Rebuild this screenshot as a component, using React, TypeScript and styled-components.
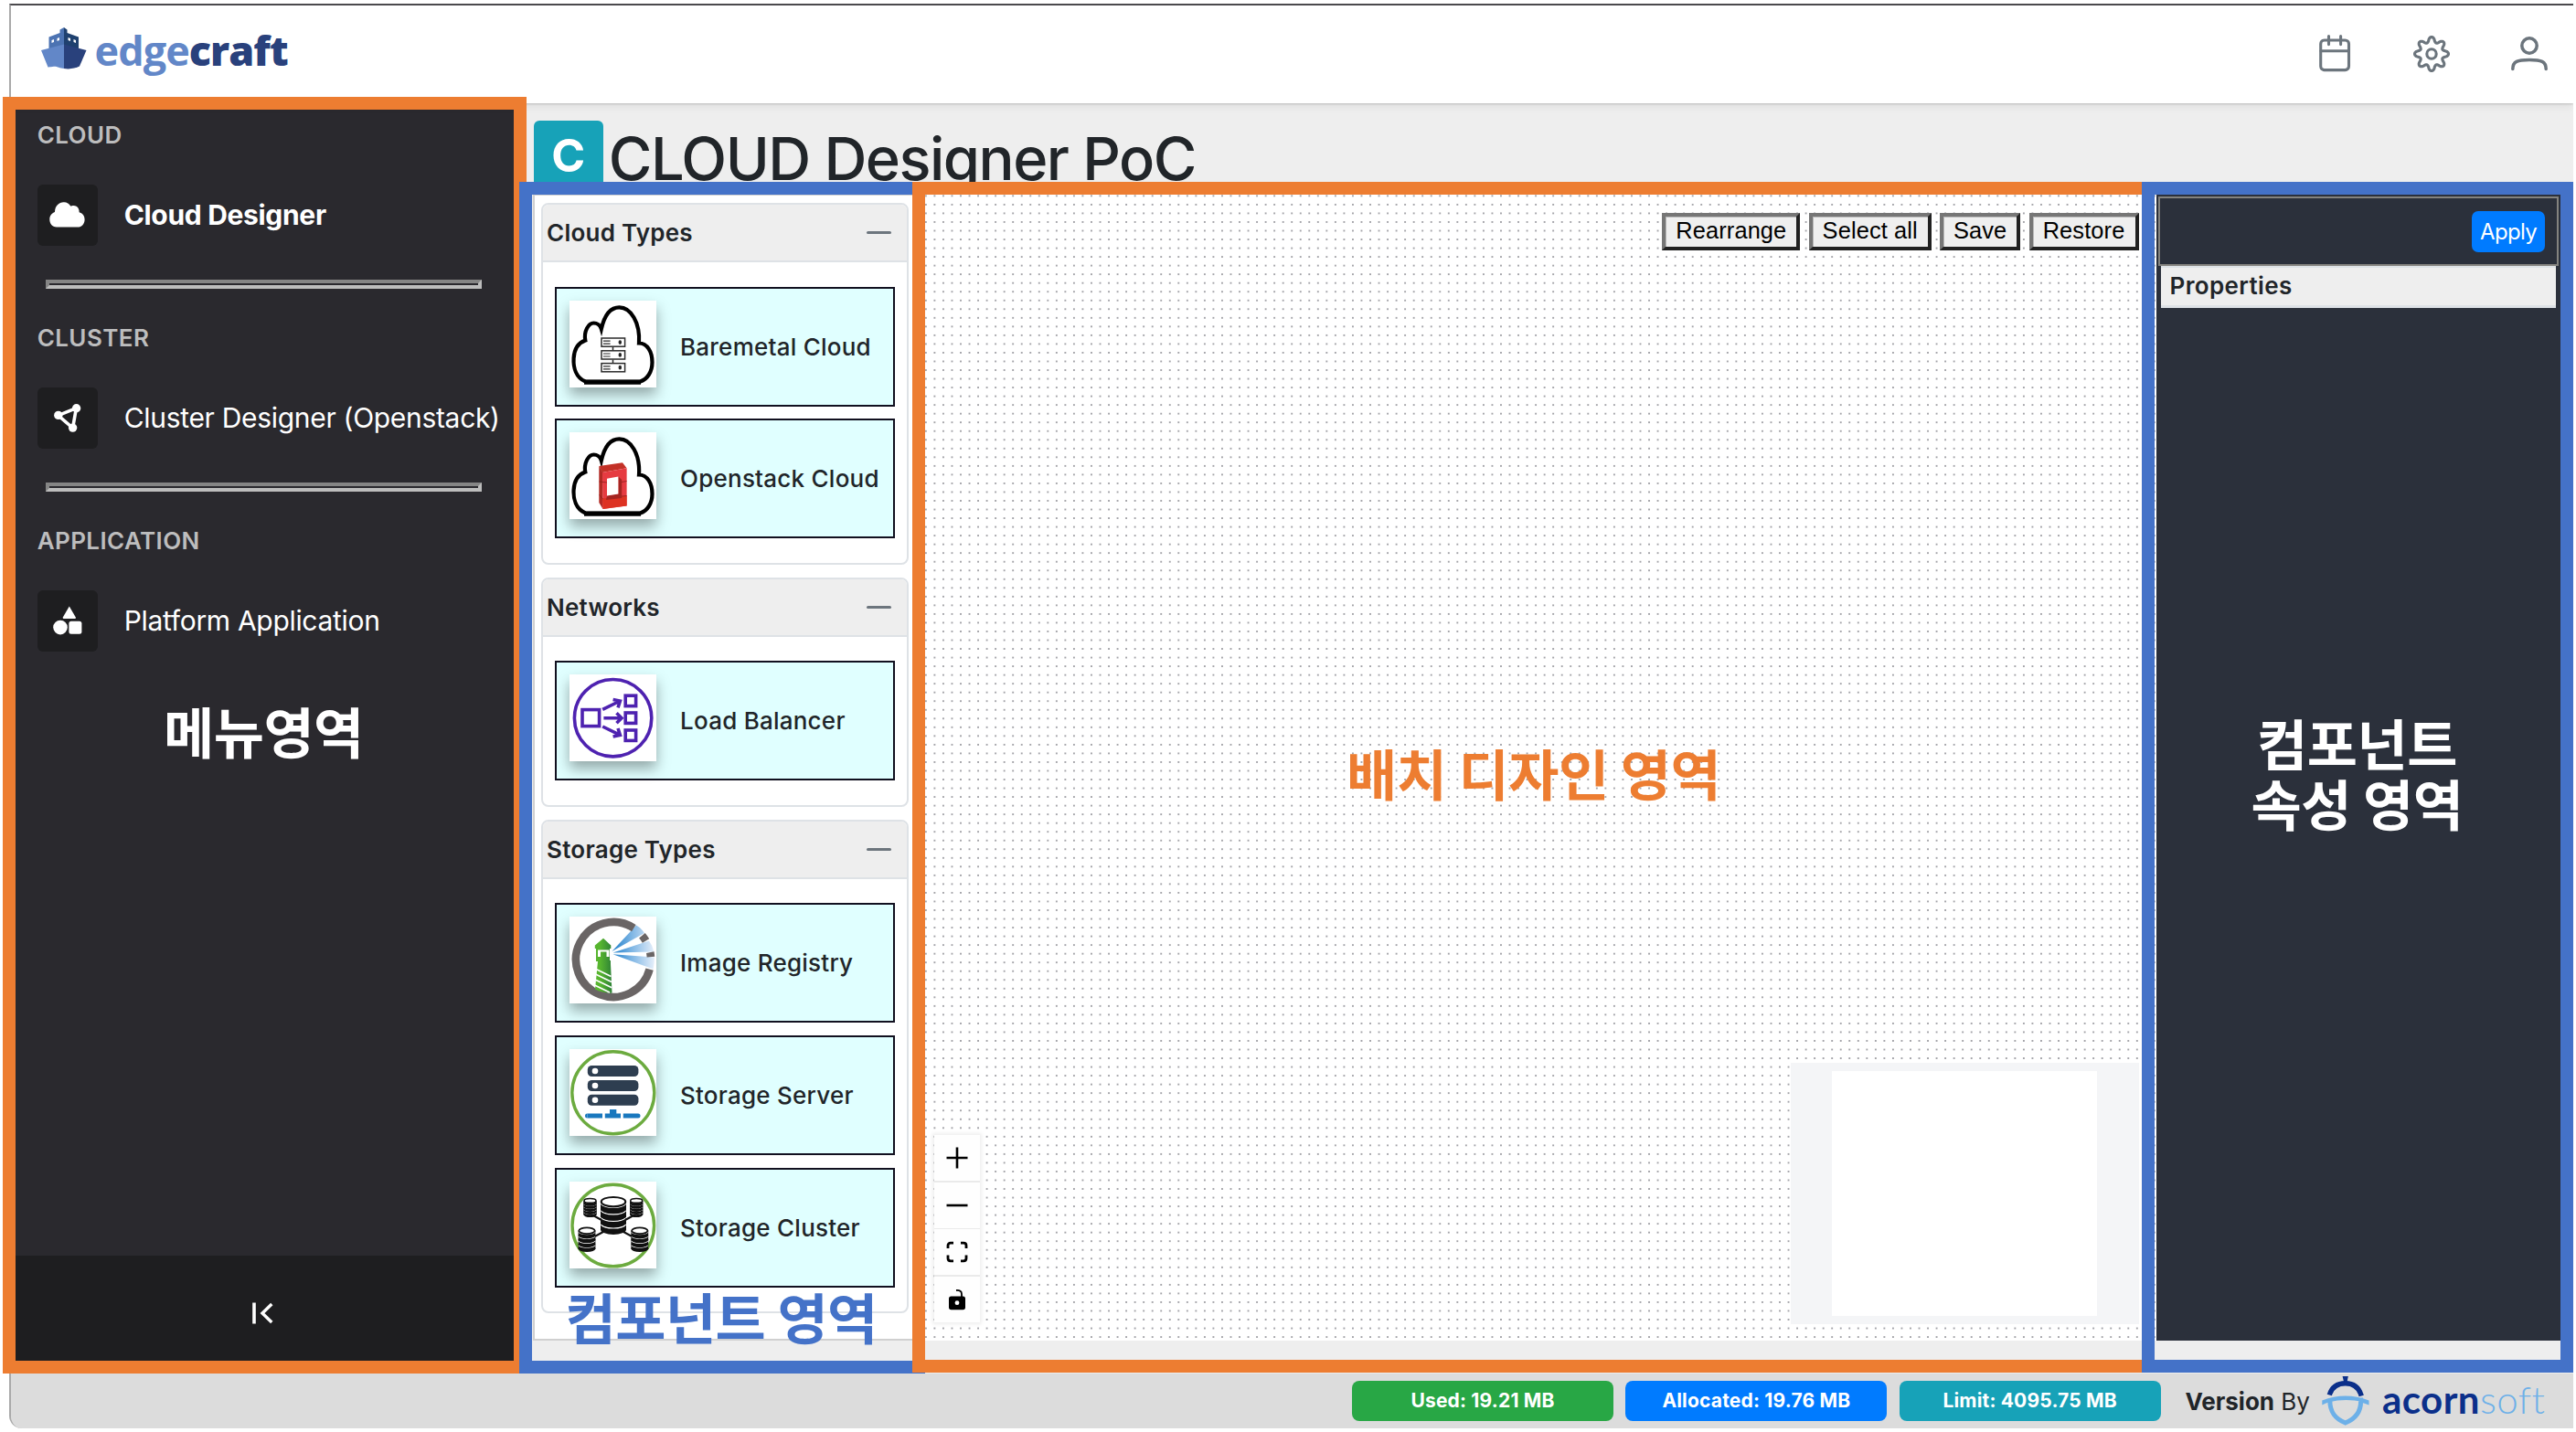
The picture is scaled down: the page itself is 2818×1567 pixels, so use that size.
import React from 'react';
import styled, { createGlobalStyle, css } from 'styled-components';

const ORANGE = '#ed7d31';
const BLUE = '#4472c8';

const GlobalStyle = createGlobalStyle`
  *, *::before, *::after { box-sizing: border-box; }
  body { margin: 0; background: #fff; }
  svg { display: block; flex: none; }
`;

const Page = styled.div`
  position: relative;
  width: 2818px;
  height: 1567px;
  padding: 4px 3px 4px 10px;
  overflow: hidden;
  background: #fff;
  color: #212529;
  font-family: Inter, 'Noto Sans CJK KR', sans-serif;
`;

const Window = styled.div`
  display: flex;
  flex-direction: column;
  height: 1559px;
  border-top: 2px solid #4b494d;
  border-left: 2px solid #a9a9a9;
  border-bottom-left-radius: 14px;
  overflow: hidden;
  background: #dcdcdc;
`;

/* Header */

const Header = styled.header`
  position: relative;
  z-index: 1;
  flex: none;
  display: flex;
  align-items: flex-start;
  justify-content: space-between;
  height: 107px;
  padding: 24px 27px 0 33px;
  background: #fff;
  box-shadow: 0 1px 2px rgba(0, 0, 0, 0.16), 0 3px 10px rgba(0, 0, 0, 0.07);
`;

const Brand = styled.div`
  display: flex;
  gap: 8.5px;
`;

const BrandName = styled.span`
  margin-top: -3px;
  font: 700 45px/56px 'Open Sans', sans-serif;
  letter-spacing: -0.95px;
  color: #6287c8;
`;

const BrandAccent = styled.b`
  color: #29417c;
`;

const HeaderActions = styled.nav`
  display: flex;
  gap: 64.7px;
  padding-top: 8px;
  color: #6c757d;
`;

/* Body and side menu */

const Body = styled.div`
  flex: none;
  display: flex;
  height: 1390px;
`;

const Sidebar = styled.aside`
  flex: none;
  display: flex;
  flex-direction: column;
  justify-content: space-between;
  width: 563px;
  background: #2a292e;
`;

const Menu = styled.div`
  display: flex;
  flex-direction: column;
  gap: 37.5px;
  padding: 18.8px 0 0 28.7px;
`;

const MenuTitle = styled.div`
  font-size: 26px;
  font-weight: 600;
  line-height: 32.5px;
  letter-spacing: 0.4px;
  color: #bdbdbe;
`;

const MenuItem = styled.div<{ $active?: boolean }>`
  display: flex;
  align-items: center;
  gap: 29px;
  height: 67px;
  color: #fff;
  font-size: 30px;
  white-space: nowrap;
  ${(p) =>
    p.$active
      ? css`
          font-weight: 700;
          letter-spacing: -0.32px;
        `
      : css`
          font-weight: 400;
          letter-spacing: -0.31px;
        `}
`;

const MenuIcon = styled.span`
  display: flex;
  align-items: center;
  justify-content: center;
  width: 66px;
  height: 67px;
  border-radius: 6px;
  background: #1e1e20;
`;

const Separator = styled.hr`
  width: 477px;
  height: 10px;
  margin: 0 0 0 9px;
  border: 4px solid;
  border-color: #858585 #bdbdbd #bdbdbd #858585;
  background: #2a292e;
`;

const CollapseBar = styled.div`
  display: flex;
  align-items: center;
  justify-content: center;
  height: 129px;
  padding: 0 11px 4px 0;
  background: #1e1e20;
`;

/* Main area */

const Main = styled.main`
  flex: 1;
  display: flex;
  flex-direction: column;
  padding-left: 8px;
  background: #eee;
`;

const TitleBar = styled.div`
  flex: none;
  display: flex;
  gap: 6px;
  height: 99px;
  padding: 19px 0 0 0.8px;
`;

const TitleBadge = styled.span`
  width: 76px;
  height: 76px;
  border-radius: 6px;
  background: #17a2b8;
  color: #fff;
  font-size: 50px;
  font-weight: 700;
  line-height: 77px;
  text-align: center;
`;

const Title = styled.h1`
  margin: 0;
  font-size: 65px;
  font-weight: 500;
  line-height: 83px;
  letter-spacing: -1.52px;
  white-space: nowrap;
`;

const Workspace = styled.div`
  flex: none;
  display: flex;
  height: 1255px;
`;

/* Component palette */

const Palette = styled.section`
  flex: none;
  display: flex;
  flex-direction: column;
  gap: 14px;
  width: 420px;
  padding: 8.3px 7px 0;
  border: 2px solid #d0d0d0;
  background: #fff;
`;

const Card = styled.div`
  border: 2px solid #dee2e6;
  border-radius: 8px;
  overflow: hidden;
`;

const CardHeader = styled.div`
  display: flex;
  align-items: center;
  justify-content: space-between;
  height: 63px;
  padding: 0 17px 0 4px;
  border-bottom: 2px solid #dee2e6;
  background: #eee;
  font-size: 26px;
  font-weight: 600;
  letter-spacing: 0.24px;
`;

const CollapseMark = styled.span`
  width: 27px;
  height: 3px;
  border-radius: 2px;
  background: #6c757d;
`;

const CardBody = styled.div`
  display: flex;
  flex-direction: column;
  gap: 13.7px;
  padding: 26.5px 13px 26.5px;
`;

const PaletteItem = styled.div`
  display: flex;
  height: 131px;
  gap: 26.5px;
  padding: 13px 0 0 13.5px;
  border: 2px solid #11101f;
  background: #e0ffff;
`;

const Tile = styled.span`
  width: 95px;
  height: 95px;
  background: #fff;
  box-shadow: 0 8px 14px rgba(0, 0, 0, 0.34);
`;

const ItemLabel = styled.span`
  font-size: 26px;
  font-weight: 500;
  line-height: 102px;
  letter-spacing: 0.24px;
  white-space: nowrap;
`;

/* Canvas */

const Canvas = styled.section`
  position: relative;
  width: 1356px;
  background: #fff;
`;

const Toolbar = styled.div`
  position: absolute;
  top: 20.7px;
  right: 19.5px;
  display: flex;
  gap: 9.4px;
`;

const ToolButton = styled.button<{ $w: number }>`
  width: ${(p) => p.$w}px;
  height: 41px;
  padding: 0 0 2px;
  border: 4px solid;
  border-color: #767676 #212121 #212121 #767676;
  border-radius: 0;
  background: #efefef;
  box-shadow: inset 1px 1px 0 #b8b8b8;
  color: #000;
  font: 25.4px/30px 'Liberation Sans', Arial, sans-serif;
  letter-spacing: 0.12px;
  white-space: nowrap;
`;

const Controls = styled.div`
  position: absolute;
  left: 18.7px;
  bottom: 20.5px;
  display: flex;
  flex-direction: column;
  gap: 1.4px;
  background: #eaeaea;
  box-shadow: 0 0 4px 2px rgba(0, 0, 0, 0.07);
`;

const ControlButton = styled.span`
  display: flex;
  align-items: center;
  justify-content: center;
  width: 50px;
  height: 50px;
  background: #fefefe;
`;

const MiniMap = styled.div`
  position: absolute;
  right: 19.5px;
  bottom: 18.5px;
  width: 381px;
  height: 286px;
  padding: 9px 45.5px;
  background: #f4f5f7;
`;

const MiniMapView = styled.div`
  width: 290px;
  height: 268px;
  background: #fff;
`;

/* Properties */

const Properties = styled.section`
  width: 442px;
  padding: 3px 2px 0;
  background: #2b303b;
`;

const PropertiesBar = styled.div`
  display: flex;
  align-items: center;
  justify-content: flex-end;
  height: 76px;
  padding-right: 13px;
  border: 2px solid #84837f;
`;

const ApplyButton = styled.button`
  width: 80px;
  height: 45px;
  padding: 0;
  border: 0;
  border-radius: 7px;
  background: #007bff;
  color: #fff;
  font: 400 24px/45px Inter, sans-serif;
  letter-spacing: -0.7px;
`;

const PropertiesTitle = styled.div`
  width: 432px;
  height: 46px;
  margin-left: 3px;
  padding-left: 9.5px;
  border-top: 2px solid #dee2e6;
  border-bottom: 3px solid #dee2e6;
  background: #eee;
  font-size: 26px;
  font-weight: 600;
  line-height: 39px;
  letter-spacing: 0.38px;
`;

/* Footer */

const Footer = styled.footer`
  flex: none;
  display: flex;
  align-items: center;
  justify-content: flex-end;
  gap: 13.3px;
  height: 60px;
  padding: 0 27px 1px 0;
  background: #dcdcdc;
`;

const Stat = styled.span<{ $color: string }>`
  width: 286px;
  height: 44px;
  border-radius: 8px;
  background: ${(p) => p.$color};
  color: #fff;
  font-size: 21px;
  font-weight: 700;
  line-height: 43px;
  letter-spacing: 0.18px;
  text-align: center;
`;

const Version = styled.span`
  width: 136px;
  margin: 2px 0 0 13.5px;
  font-size: 26px;
  line-height: 32px;
  white-space: nowrap;
`;

const Vendor = styled.span`
  width: 182px;
  font: 300 42px/50px Lato, sans-serif;
  letter-spacing: 0.45px;
  color: #6db0e8;
  white-space: nowrap;
  margin: -4px 0 0 1px;
`;

const VendorStrong = styled.b`
  font-weight: 700;
  color: #0b2f8a;
`;

/* Annotations laid over the page */

const Frame = styled.div<{ $x: number; $y: number; $w: number; $h: number; $color: string }>`
  position: absolute;
  z-index: 2;
  left: ${(p) => p.$x}px;
  top: ${(p) => p.$y}px;
  width: ${(p) => p.$w}px;
  height: ${(p) => p.$h}px;
  border: 14px solid ${(p) => p.$color};
`;

const Caption = styled.div<{ $x: number; $y: number; $color: string }>`
  position: absolute;
  z-index: 3;
  left: ${(p) => p.$x}px;
  top: ${(p) => p.$y}px;
  color: ${(p) => p.$color};
  font: 700 60px/66px 'Noto Sans CJK KR', sans-serif;
  letter-spacing: -0.5px;
  text-align: center;
  white-space: pre;
`;

/* Drawings */

const ShipLogo = () => (
  <svg width="50" height="46" viewBox="0 0 50 46">
    <path d="M25 0 L20.5 2.5 V6 L8.5 10.5 V23 H25 Z" fill="#4c73b2" />
    <path d="M25 0 L28.5 2.5 V6 L41 10.5 V23 H25 Z" fill="#1f416f" />
    <path d="M0 25 L25 18.5 V45 C20 45 18 42.6 14 42.8 C11 43 9 43.6 7.5 43.4 Z" fill="#6287c8" />
    <path d="M49.5 25 L25 18.5 V45 C31 46 37 45 42 42.6 Z" fill="#29417c" />
    <path d="M11.5 14 l2.5 -1 v3 l-2.5 1 z M17.5 12 l2.5 -1 v3 l-2.5 1 z M29.5 11 l2.5 1 v3 l-2.5 -1 z M35.5 13 l2.5 1 v3 l-2.5 -1 z" fill="#fff" />
  </svg>
);

const CalendarIcon = () => (
  <svg width="42" height="42" viewBox="0 0 42 42" fill="none" stroke="currentColor" strokeWidth="3.1" strokeLinecap="round">
    <rect x="5.7" y="6" width="30.8" height="32.6" rx="4" />
    <path d="M6 17.7 H36 M14.5 1.6 V10.6 M27.6 1.6 V10.6" />
  </svg>
);

const gearPath = (() => {
  const pts: string[] = [];
  for (let i = 0; i <= 160; i++) {
    const a = (i / 160) * Math.PI * 2;
    const wave = Math.cos(8 * a);
    const r = 15.7 + 2.8 * Math.sign(wave) * Math.pow(Math.abs(wave), 0.75);
    pts.push(`${(21 + r * Math.sin(a)).toFixed(2)} ${(21 - r * Math.cos(a)).toFixed(2)}`);
  }
  return `M${pts.join('L')}Z`;
})();

const GearIcon = () => (
  <svg width="42" height="42" viewBox="0 0 42 42" fill="none" stroke="currentColor" strokeWidth="3.1" strokeLinejoin="round">
    <path d={gearPath} />
    <circle cx="21" cy="21" r="5.2" />
  </svg>
);

const UserIcon = () => (
  <svg width="42" height="42" viewBox="0 0 42 42" fill="none" stroke="currentColor" strokeWidth="3.5" strokeLinecap="round">
    <circle cx="21" cy="12" r="8.2" />
    <path d="M2.8 37.6 C2.8 29 8 27.5 21 27.5 C34 27.5 39.2 29 39.2 37.6" />
  </svg>
);

const CloudIcon = () => (
  <svg width="39" height="28" viewBox="0 0 39 28" fill="#fff">
    <path d="M8 27.5 C3 27.5 0.3 23.5 0.3 19 C0.3 15 2.7 12.3 6 11 C6 4.5 10.4 0.3 15.8 0.3 C19.5 0.3 21.6 2 23.2 4.6 C24.6 4 27.5 3.3 29.6 4.8 C32 6.4 32.8 9 32.6 11.3 C36 12.2 38.6 15 38.6 19.2 C38.6 24 35.4 27.5 31 27.5 Z" />
  </svg>
);

const ClusterIcon = () => (
  <svg width="30" height="31" viewBox="0 0 30 31">
    <path d="M4.6 12.6 L24.4 4.6 L20.6 26.4 Z" fill="none" stroke="#fff" strokeWidth="3.6" />
    <g fill="#fff">
      <circle cx="4.8" cy="12.4" r="4.7" />
      <circle cx="24.6" cy="4.8" r="4.7" />
      <circle cx="20.6" cy="26.1" r="4.7" />
    </g>
  </svg>
);

const ShapesIcon = () => (
  <svg width="32" height="32" viewBox="0 0 32 32" fill="#fff">
    <path d="M17.8 0.6 L24.8 12.4 Q25.2 14 24 14 H11.5 Q10.4 14 10.8 12.6 Z" />
    <circle cx="8" cy="23.6" r="7.8" />
    <rect x="17.4" y="16.8" width="14" height="14" rx="2.5" />
  </svg>
);

const CollapseIcon = () => (
  <svg width="24" height="24" viewBox="0 0 24 24" fill="none" stroke="#fff">
    <path d="M2 0.5 V23.5" strokeWidth="3.6" />
    <path d="M21.3 2 L11 12 L21.3 22" strokeWidth="3.4" />
  </svg>
);

const CLOUD_OUTLINE =
  'M17.5 88.5 C7 84 4 73 4.6 63 C5.2 53 10 46 17.3 43.5 C15.5 34 20.5 24.5 26.5 24.5 C30 24.5 33.6 27 34.8 31 C38.5 14.5 46 7.3 54.5 7.3 C67 7.3 77.5 24 76 46.5 C85 46.5 90.5 56 90.5 67.5 C90.5 78 85 86 77.5 88.5 Z';

const BaremetalImage = () => (
  <svg width="95" height="95" viewBox="0 0 95 95" fill="none" stroke="#000">
    <path d={CLOUD_OUTLINE} strokeWidth="4.2" />
    <path d="M16 89.3 H78" strokeWidth="5" />
    <g stroke="#2b2b2b" strokeWidth="1.5">
      <path d="M47.5 50.5 V55 M47.5 64.5 V69" />
      {[41, 54.8, 68.6].map((y) => (
        <g key={y}>
          <rect x="35" y={y} width="25.6" height="9.2" />
          <path d={`M37 ${y + 3.2} H44.6 M37 ${y + 6.2} H44.6`} strokeWidth="1.2" />
          <ellipse cx="55.3" cy={y + 4.6} rx="1" ry="1.6" fill="#000" />
        </g>
      ))}
    </g>
  </svg>
);

const OpenstackImage = () => (
  <svg width="95" height="95" viewBox="0 0 95 95">
    <path d={CLOUD_OUTLINE} fill="none" stroke="#000" strokeWidth="4.2" />
    <path d="M16 89.3 H78" stroke="#000" strokeWidth="5" />
    <path d="M32.3 37 L58 33.2 L62.6 39.3 L36 44 Z" fill="#c33127" />
    <path d="M32.3 37 L36.5 44 V84 L32.3 77 Z" fill="#b22a24" />
    <path d="M36 44 L62.6 39.3 V80.5 L36.5 84 Z" fill="#e63b41" />
    <path d="M36 72.5 L62.6 69.5 V80.5 L36.5 84 Z" fill="#dd3222" />
    <path d="M53.4 48.6 L57.2 52 V72 L53.4 67.5 Z M41 69.5 L53.4 67.3 L57.2 72 L40 74 Z" fill="#a52521" />
    <path d="M41 50.8 L53.4 48.6 V67.5 L41 69.5 Z" fill="#fff" />
    <path d="M32.5 54 L41 55 M32.5 68.5 L36.5 73 M57 54.5 L62.6 53.5 M57 70 L62.6 69.5" stroke="#8e1f1c" strokeWidth="0.8" />
  </svg>
);

const LoadBalancerImage = () => (
  <svg width="95" height="95" viewBox="0 0 95 95" fill="none" stroke="#4e22b0" strokeWidth="3.6">
    <circle cx="47.6" cy="47.7" r="42.2" />
    <rect x="14" y="38.6" width="18.6" height="18" />
    <rect x="61.2" y="23.2" width="11.4" height="11.4" />
    <rect x="61.2" y="42" width="11.4" height="11.4" />
    <rect x="61.2" y="61" width="11.4" height="11.4" />
    <path d="M37.4 47.7 H57 M51.5 42.2 L57 47.7 L51.5 53.2" />
    <path d="M36.2 38.4 L55.4 29 M47.6 27.4 L55.4 29 L53 36.4" />
    <path d="M36.2 57 L55.4 66.4 M53 59 L55.4 66.4 L47.6 68" />
  </svg>
);

const ringPoint = (deg: number, r: number) => {
  const a = (deg * Math.PI) / 180;
  return `${(48 + r * Math.cos(a)).toFixed(2)} ${(47 - r * Math.sin(a)).toFixed(2)}`;
};

const RegistryImage = () => (
  <svg width="95" height="95" viewBox="0 0 95 95">
    <defs>
      <linearGradient id="beam" x1="47" x2="93" y1="38" y2="38" gradientUnits="userSpaceOnUse">
        <stop offset="0" stopColor="#1f7fcb" />
        <stop offset="0.45" stopColor="#7db5e4" />
        <stop offset="1" stopColor="#e6effa" />
      </linearGradient>
      <linearGradient id="tower" x1="28" x2="47" y1="0" y2="0" gradientUnits="userSpaceOnUse">
        <stop offset="0.3" stopColor="#57b52f" />
        <stop offset="1" stopColor="#2c7f36" />
      </linearGradient>
    </defs>
    <path d="M46.5 38 L73 9.5 Q78 12 82 18 Z M47.5 39.5 L87 26.5 Q91 32 92.5 38.5 Z M47.5 41.3 L93 44.5 Q93 51 91.5 57.5 Z" fill="url(#beam)" />
    <g fill="none" stroke="#6a6565" strokeWidth="8.6">
      <path d={`M${ringPoint(57, 41)} A41 41 0 1 0 ${ringPoint(-15, 41)}`} />
      <path d={`M${ringPoint(40, 41)} A41 41 0 0 1 ${ringPoint(30, 41)}`} />
      <path d={`M${ringPoint(11, 41)} A41 41 0 0 1 ${ringPoint(4, 41)}`} />
    </g>
    <path d="M37 23.7 L45.3 31.5 V35 H44 V48 H45 V52 L46.5 83.6 Q36 84 28 79.5 L31 49 H29 V35 H27.8 V31.5 Z" fill="url(#tower)" />
    <path d="M31 36.5 H43.5 V44 H40.5 V38.6 H34 V44 H31 Z" fill="#fff" />
    <path d="M29 57.5 L45.5 65.5 M28.5 63 L46 71.5 M28 69 L46.2 77.8 M27.5 75 L44 83" stroke="#fff" strokeWidth="1.7" />
  </svg>
);

const StorageServerImage = () => (
  <svg width="95" height="95" viewBox="0 0 95 95">
    <circle cx="47.8" cy="47.8" r="45" fill="none" stroke="#6cab3f" strokeWidth="3.4" />
    {[18, 34, 49.8].map((y) => (
      <g key={y}>
        <rect x="19.8" y={y} width="55.6" height="12" rx="4.5" fill="#2e3e50" />
        <circle cx="28" cy={y + 6} r="3.3" fill="#fff" />
      </g>
    ))}
    <path d="M19.5 73 H36 M58.8 73 H75" stroke="#1978be" strokeWidth="5" />
    <path d="M19.5 70.5 a2.5 2.5 0 0 0 0 5 z M75 70.5 a2.5 2.5 0 0 1 0 5 z M38.8 70.5 H44 V66 H51.3 V70.5 H56 V75.5 H38.8 Z" fill="#1978be" />
  </svg>
);

type StackProps = { x: number; y: number; w: number; h: number; n: number; stroke: number };

const DiscStack = ({ x, y, w, h, n, stroke }: StackProps) => {
  const rx = w / 2;
  const ry = w * 0.2;
  const step = (h - 2 * ry) / n;
  const cx = x + rx;
  const discs = Array.from({ length: n }, (_, i) => n - 1 - i);
  return (
    <g>
      {discs.map((i) => {
        const top = y + ry + i * step;
        return (
          <g key={i}>
            <ellipse cx={cx} cy={top + step} rx={rx} ry={ry} fill="#111" />
            <rect x={x} y={top} width={w} height={step} fill="#111" />
            <path
              d={`M${x + 0.5} ${top + step * 0.25} A${rx} ${ry} 0 0 0 ${x + w - 0.5} ${top + step * 0.25}`}
              fill="none"
              stroke="#fff"
              strokeWidth={stroke}
            />
          </g>
        );
      })}
      <ellipse cx={cx} cy={y + ry} rx={rx - 0.7} ry={ry - 0.4} fill="#fff" stroke="#111" strokeWidth={stroke + 0.5} />
    </g>
  );
};

const StorageClusterImage = () => (
  <svg width="95" height="95" viewBox="0 0 95 95">
    <circle cx="47.8" cy="48" r="44.8" fill="none" stroke="#6cab3f" strokeWidth="3.4" />
    <path d="M24 36 L72 62 M72 36 L24 62" stroke="#111" strokeWidth="2" />
    <DiscStack x={15.3} y={18} w={14.4} h={21} n={5} stroke={1} />
    <DiscStack x={66} y={18} w={14.4} h={21} n={5} stroke={1} />
    <DiscStack x={9.6} y={50} w={18.8} h={27} n={4} stroke={1.3} />
    <DiscStack x={67.4} y={50} w={18.8} h={27} n={4} stroke={1.3} />
    <DiscStack x={34} y={16.5} w={28} h={41.5} n={4} stroke={1.5} />
  </svg>
);

const DotGrid = () => (
  <svg width="1356" height="1255">
    <defs>
      <pattern id="dots" x="5.1" y="-2.4" width="9.532" height="9.532" patternUnits="userSpaceOnUse">
        <circle cx="4.766" cy="4.766" r="0.95" fill="#86868c" />
      </pattern>
    </defs>
    <rect width="1356" height="1255" fill="url(#dots)" />
  </svg>
);

const PlusIcon = () => (
  <svg width="24" height="24" viewBox="0 0 24 24" stroke="#000" strokeWidth="2.6">
    <path d="M12 0.5 V23.5 M0.5 12 H23.5" />
  </svg>
);

const MinusIcon = () => (
  <svg width="24" height="24" viewBox="0 0 24 24" stroke="#000" strokeWidth="2.6">
    <path d="M0.5 12 H23.5" />
  </svg>
);

const FitIcon = () => (
  <svg width="24" height="24" viewBox="0 0 24 24" stroke="#000" strokeWidth="2.8" fill="none">
    <path d="M8 2.2 H5 Q2 2.2 2 5 V8 M16 2.2 H19 Q22 2.2 22 5 V8 M2 15.5 V19 Q2 21.8 5 21.8 H8 M22 15.5 V19 Q22 21.8 19 21.8 H16" />
  </svg>
);

const UnlockIcon = () => (
  <svg width="24" height="24" viewBox="0 0 24 24">
    <path d="M11 2 Q17 1.6 17 6 V9" fill="none" stroke="#000" strokeWidth="1.8" />
    <path d="M5.5 8.4 H18.5 Q21 8.4 21 11 V20.6 Q21 23.2 18.5 23.2 H5.5 Q3 23.2 3 20.6 V11 Q3 8.4 5.5 8.4 Z" fill="#000" />
    <circle cx="12" cy="15.7" r="2.4" fill="#fff" />
  </svg>
);

const AcornLogo = () => (
  <svg width="52" height="54" viewBox="0 0 52 54">
    <path d="M22.6 0 H28.8 L27.6 6 H24 Z" fill="#0b2f8a" />
    <path d="M8.3 20.5 C11 11.5 18 7.8 25.7 7.8 C33.4 7.8 40.5 11.5 43.2 21.5" fill="none" stroke="#0b2f8a" strokeWidth="5.4" />
    <path d="M0.3 26.5 Q25.6 16.5 51.5 26.5 V31.5 Q46 29 40.5 28 V23.5 H45 V28 Q25.6 24 8 28.2 Q3.6 29.5 0.3 31.5 Z" fill="#6db0e8" />
    <path d="M8.8 26.5 C8.8 39.5 14.5 46.5 25.7 51 C36.9 46.5 42.6 39.5 42.6 27.5" fill="none" stroke="#6db0e8" strokeWidth="5" />
  </svg>
);

/* Page data */

const palette = [
  { title: 'Cloud Types', items: [['Baremetal Cloud', BaremetalImage], ['Openstack Cloud', OpenstackImage]] },
  { title: 'Networks', items: [['Load Balancer', LoadBalancerImage]] },
  {
    title: 'Storage Types',
    items: [
      ['Image Registry', RegistryImage],
      ['Storage Server', StorageServerImage],
      ['Storage Cluster', StorageClusterImage],
    ],
  },
] as { title: string; items: [string, React.ComponentType][] }[];

export default function App() {
  return (
    <Page>
      <GlobalStyle />
      <Window>
        <Header>
          <Brand>
            <ShipLogo />
            <BrandName>
              edge<BrandAccent>craft</BrandAccent>
            </BrandName>
          </Brand>
          <HeaderActions>
            <CalendarIcon />
            <GearIcon />
            <UserIcon />
          </HeaderActions>
        </Header>

        <Body>
          <Sidebar>
            <Menu>
              <MenuTitle>CLOUD</MenuTitle>
              <MenuItem $active>
                <MenuIcon><CloudIcon /></MenuIcon>
                Cloud Designer
              </MenuItem>
              <Separator />
              <MenuTitle>CLUSTER</MenuTitle>
              <MenuItem>
                <MenuIcon><ClusterIcon /></MenuIcon>
                Cluster Designer (Openstack)
              </MenuItem>
              <Separator />
              <MenuTitle>APPLICATION</MenuTitle>
              <MenuItem>
                <MenuIcon><ShapesIcon /></MenuIcon>
                Platform Application
              </MenuItem>
            </Menu>
            <CollapseBar><CollapseIcon /></CollapseBar>
          </Sidebar>

          <Main>
            <TitleBar>
              <TitleBadge>C</TitleBadge>
              <Title>CLOUD Designer PoC</Title>
            </TitleBar>
            <Workspace>
              <Palette>
                {palette.map((group) => (
                  <Card key={group.title}>
                    <CardHeader>
                      {group.title}
                      <CollapseMark />
                    </CardHeader>
                    <CardBody>
                      {group.items.map(([label, Image]) => (
                        <PaletteItem key={label}>
                          <Tile><Image /></Tile>
                          <ItemLabel>{label}</ItemLabel>
                        </PaletteItem>
                      ))}
                    </CardBody>
                  </Card>
                ))}
              </Palette>

              <Canvas>
                <DotGrid />
                <Toolbar>
                  <ToolButton $w={151}>Rearrange</ToolButton>
                  <ToolButton $w={134}>Select all</ToolButton>
                  <ToolButton $w={88}>Save</ToolButton>
                  <ToolButton $w={120}>Restore</ToolButton>
                </Toolbar>
                <Controls>
                  <ControlButton><PlusIcon /></ControlButton>
                  <ControlButton><MinusIcon /></ControlButton>
                  <ControlButton><FitIcon /></ControlButton>
                  <ControlButton><UnlockIcon /></ControlButton>
                </Controls>
                <MiniMap><MiniMapView /></MiniMap>
              </Canvas>

              <Properties>
                <PropertiesBar>
                  <ApplyButton>Apply</ApplyButton>
                </PropertiesBar>
                <PropertiesTitle>Properties</PropertiesTitle>
              </Properties>
            </Workspace>
          </Main>
        </Body>

        <Footer>
          <Stat $color="#28a745">Used: 19.21 MB</Stat>
          <Stat $color="#007bff">Allocated: 19.76 MB</Stat>
          <Stat $color="#17a2b8">Limit: 4095.75 MB</Stat>
          <Version><b>Version</b> By</Version>
          <AcornLogo />
          <Vendor><VendorStrong>acorn</VendorStrong>soft</Vendor>
        </Footer>
      </Window>

      <Frame $x={3} $y={106} $w={572.5} $h={1397} $color={ORANGE} />
      <Frame $x={568} $y={199} $w={444} $h={1304} $color={BLUE} />
      <Frame $x={997.5} $y={199} $w={1359} $h={1303} $color={ORANGE} />
      <Frame $x={2342.7} $y={199} $w={472} $h={1303} $color={BLUE} />
      <Caption $x={179} $y={766} $color="#fff">메뉴영역</Caption>
      <Caption $x={618.5} $y={1407} $color={BLUE}>컴포넌트 영역</Caption>
      <Caption $x={1473} $y={812} $color={ORANGE}>배치 디자인 영역</Caption>
      <Caption $x={2462.5} $y={778.5} $color="#fff">{'컴포넌트\n속성 영역'}</Caption>
    </Page>
  );
}
